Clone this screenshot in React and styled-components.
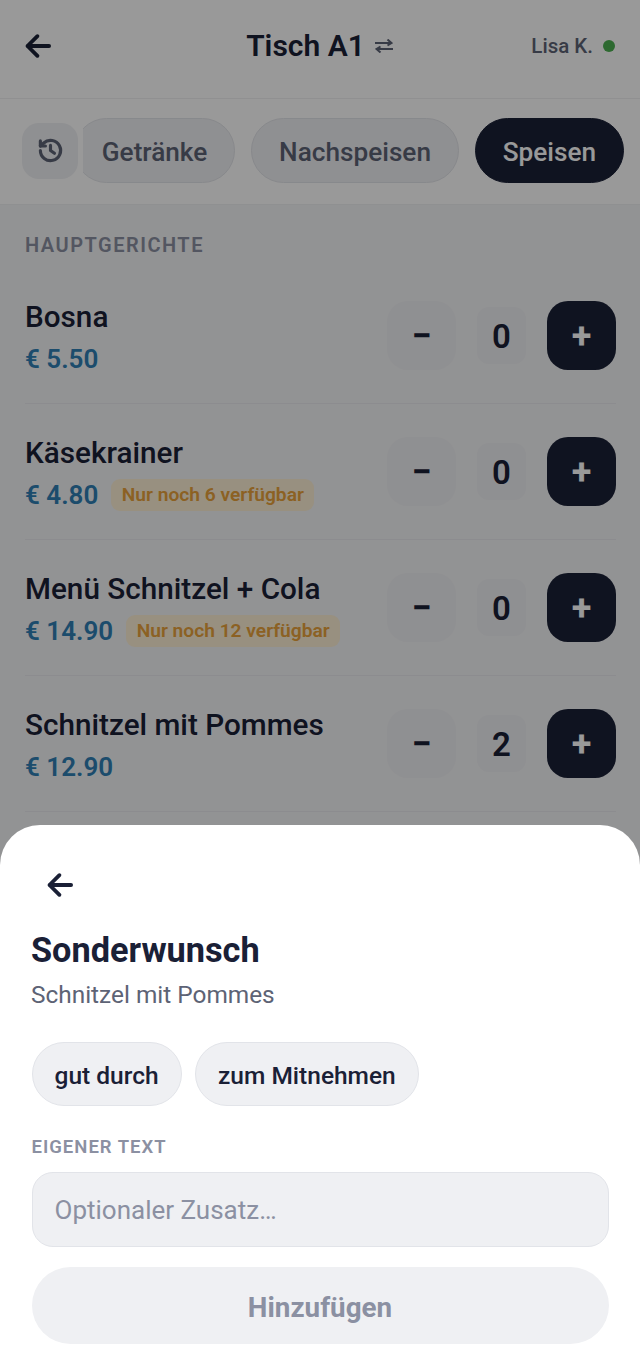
import React from "react";
import styled, { createGlobalStyle } from "styled-components";

const Global = createGlobalStyle`
  html, body { margin: 0; padding: 0; }
  body { font-family: Roboto, "Liberation Sans", sans-serif; background: #f4f5f7; }
  * { box-sizing: border-box; }
`;

const Page = styled.div`
  position: relative;
  width: 640px;
  height: 1369px;
  overflow: hidden;
  background: #f4f5f7;
  color: #1a2036;
`;
const Header = styled.header`
  height: 99px;
  background: #fff;
  border-bottom: 1px solid #f0f0f2;
  display: grid;
  grid-template-columns: 1fr auto 1fr;
  align-items: center;
  padding: 0 25px 7px 24px;
`;
const BackButton = styled.button`
  border: 0;
  padding: 0;
  background: none;
  color: ${p => p.$color || "#1a2036"};
  display: flex;
  width: 28px;
  height: 28px;
`;
const TitleGroup = styled.div`
  display: flex;
  align-items: center;
  gap: 10px;
`;
const Title = styled.h1`
  margin: 0;
  font-size: 30px;
  line-height: 34px;
  font-weight: 600;
  color: #1a2036;
`;
const UserBox = styled.div`
  justify-self: end;
  display: flex;
  align-items: center;
  gap: 10px;
  font-size: 20.5px;
  font-weight: 500;
  color: #5d6375;
`;
const StatusDot = styled.span`
  width: 12px;
  height: 12px;
  border-radius: 50%;
  background: #4caf50;
`;
const TabBar = styled.nav`
  height: 106px;
  background: #fff;
  border-bottom: 1px solid #eef0f2;
  display: flex;
  align-items: center;
  padding: 0 16px 2px 22px;
`;
const HistoryButton = styled.button`
  flex: none;
  width: 56px;
  height: 56px;
  border: 0;
  padding: 0;
  border-radius: 17px;
  background: #eff0f3;
  color: #5d6375;
  display: flex;
  align-items: center;
  justify-content: center;
  margin-right: 5px;
`;
const TabScroller = styled.div`
  flex: 1;
  min-width: 0;
  display: flex;
  justify-content: flex-end;
  gap: 16px;
  overflow: hidden;
`;
const Tab = styled.button`
  flex: none;
  height: 65px;
  border-radius: 33px;
  padding: 3px 26.9px 0;
  font: 500 26.2px Roboto, sans-serif;
  border: 1.5px solid ${p => (p.$active ? "#1a2036" : "#e2e4e9")};
  background: ${p => (p.$active ? "#1a2036" : "#eff0f3")};
  color: ${p => (p.$active ? "#fff" : "#5d6375")};
`;
const Content = styled.main`
  padding: 27px 24px 0 25px;
`;
const SectionLabel = styled.h2`
  margin: 0 0 10px;
  font-size: 20px;
  line-height: 26px;
  font-weight: 600;
  letter-spacing: 1.5px;
  color: #8b90a2;
`;
const Row = styled.div`
  height: 136px;
  border-bottom: 1px solid #e9eaee;
  display: flex;
  align-items: center;
  justify-content: space-between;
`;
const ItemInfo = styled.div`
  display: flex;
  flex-direction: column;
  gap: 8px;
  padding-top: 2px;
`;
const ItemName = styled.div`
  font-size: 29.7px;
  line-height: 36px;
  font-weight: 500;
  color: #1a2036;
`;
const PriceLine = styled.div`
  display: flex;
  align-items: center;
  gap: 13px;
  height: 32px;
`;
const Price = styled.span`
  font-size: 26px;
  font-weight: 600;
  color: #2f7fb5;
`;
const StockBadge = styled.span`
  height: 32px;
  padding: 0 10.5px;
  border-radius: 9px;
  background: #fdf0d5;
  color: #e9a23b;
  font-size: 19.2px;
  line-height: 32px;
  font-weight: 600;
`;
const Stepper = styled.div`
  display: flex;
  align-items: center;
`;
const StepButton = styled.button`
  width: 69px;
  height: 69px;
  border: 0;
  padding: 0;
  border-radius: 21px;
  background: ${p => (p.$plus ? "#1a2036" : "#eff0f3")};
  color: ${p => (p.$plus ? "#fff" : "#1a2036")};
  font: 700 36px Roboto, sans-serif;
  display: flex;
  align-items: center;
  justify-content: center;
`;
const Count = styled.div`
  width: 49px;
  height: 57px;
  margin: 0 21px;
  padding-top: 2px;
  border-radius: 12px;
  background: #eff0f3;
  color: #1a2036;
  font-size: 33px;
  font-weight: 600;
  display: flex;
  align-items: center;
  justify-content: center;
`;
const Overlay = styled.div`
  position: absolute;
  inset: 0;
  background: rgba(0, 0, 0, 0.4);
`;
const Sheet = styled.section`
  position: absolute;
  left: 0;
  right: 0;
  bottom: 0;
  height: 544px;
  background: #fff;
  border-radius: 40px 40px 0 0;
  padding: 46px 31.5px 0;
  display: flex;
  flex-direction: column;
`;
const SheetBack = styled(BackButton)`
  margin-left: 14px;
`;
const SheetTitle = styled.h2`
  margin: 29px 0 0 -0.5px;
  font-size: 34.3px;
  line-height: 44px;
  font-weight: 700;
  color: #1a2036;
`;
const SheetSub = styled.p`
  margin: 7px 0 0 -0.5px;
  font-size: 24.4px;
  line-height: 32px;
  color: #5d6375;
`;
const ChipRow = styled.div`
  display: flex;
  gap: 13.5px;
  margin-top: 31px;
`;
const Chip = styled.button`
  height: 64px;
  padding: 3px 22px 0;
  border-radius: 32px;
  border: 1.5px solid #e2e4e9;
  background: #eff0f3;
  color: #1a2036;
  font: 500 24.5px Roboto, sans-serif;
`;
const FieldLabel = styled.div`
  margin-top: 29px;
  font-size: 18.5px;
  line-height: 24px;
  font-weight: 600;
  letter-spacing: 1px;
  color: #8b90a2;
`;
const TextField = styled.div`
  margin-top: 13px;
  height: 75px;
  padding: 1px 22px 0;
  border: 1.5px solid #e2e4e9;
  border-radius: 21px;
  background: #eff0f3;
  color: #8b90a2;
  font-size: 26px;
  display: flex;
  align-items: center;
`;
const SubmitButton = styled.button`
  margin-top: 20px;
  height: 77px;
  border: 0;
  padding: 3px 0 0;
  border-radius: 39px;
  background: #eff0f3;
  color: #8b90a2;
  font: 700 27.8px Roboto, sans-serif;
`;

const ArrowLeft = () => (
  <svg width="28" height="28" viewBox="0 0 24 24" fill="none" stroke="currentColor" strokeWidth="3.3" strokeLinecap="round" strokeLinejoin="round">
    <path d="M21.5 12H3.5" />
    <path d="M11.5 3.6L3 12l8.5 8.4" />
  </svg>
);
const SwapIcon = () => (
  <svg width="18" height="14" viewBox="0 0 18 14" fill="none" stroke="#5d6375" strokeWidth="2">
    <path d="M0 4H16.5M12.5 0.5L16.5 4l-4 2.5" />
    <path d="M18 10H1.5M5.5 7.5L1.5 10l4 3.5" />
  </svg>
);
const HistoryIcon = () => (
  <svg width="27" height="27" viewBox="0 0 24 24" fill="none" stroke="currentColor" strokeWidth="2.8" strokeLinecap="round" strokeLinejoin="round">
    <path d="M3 12a9 9 0 1 0 3-6.7L3 8" />
    <path d="M3 3.5V8h4.5" />
    <path d="M12 7.5V12l3.5 2.5" />
  </svg>
);

const items = [
  { name: "Bosna", price: "€ 5.50", count: 0 },
  { name: "Käsekrainer", price: "€ 4.80", count: 0, stock: "Nur noch 6 verfügbar" },
  { name: "Menü Schnitzel + Cola", price: "€ 14.90", count: 0, stock: "Nur noch 12 verfügbar" },
  { name: "Schnitzel mit Pommes", price: "€ 12.90", count: 2 },
];

export default function App() {
  return (
    <Page>
      <Global />
      <Header>
        <BackButton><ArrowLeft /></BackButton>
        <TitleGroup><Title>Tisch A1</Title><SwapIcon /></TitleGroup>
        <UserBox>Lisa K.<StatusDot /></UserBox>
      </Header>
      <TabBar>
        <HistoryButton><HistoryIcon /></HistoryButton>
        <TabScroller>
          <Tab>Getränke</Tab>
          <Tab>Nachspeisen</Tab>
          <Tab $active>Speisen</Tab>
        </TabScroller>
      </TabBar>
      <Content>
        <SectionLabel>HAUPTGERICHTE</SectionLabel>
        {items.map(it => (
          <Row key={it.name}>
            <ItemInfo>
              <ItemName>{it.name}</ItemName>
              <PriceLine>
                <Price>{it.price}</Price>
                {it.stock && <StockBadge>{it.stock}</StockBadge>}
              </PriceLine>
            </ItemInfo>
            <Stepper>
              <StepButton>−</StepButton>
              <Count>{it.count}</Count>
              <StepButton $plus>+</StepButton>
            </Stepper>
          </Row>
        ))}
      </Content>
      <Overlay />
      <Sheet>
        <SheetBack><ArrowLeft /></SheetBack>
        <SheetTitle>Sonderwunsch</SheetTitle>
        <SheetSub>Schnitzel mit Pommes</SheetSub>
        <ChipRow>
          <Chip>gut durch</Chip>
          <Chip>zum Mitnehmen</Chip>
        </ChipRow>
        <FieldLabel>EIGENER TEXT</FieldLabel>
        <TextField>Optionaler Zusatz…</TextField>
        <SubmitButton>Hinzufügen</SubmitButton>
      </Sheet>
    </Page>
  );
}
